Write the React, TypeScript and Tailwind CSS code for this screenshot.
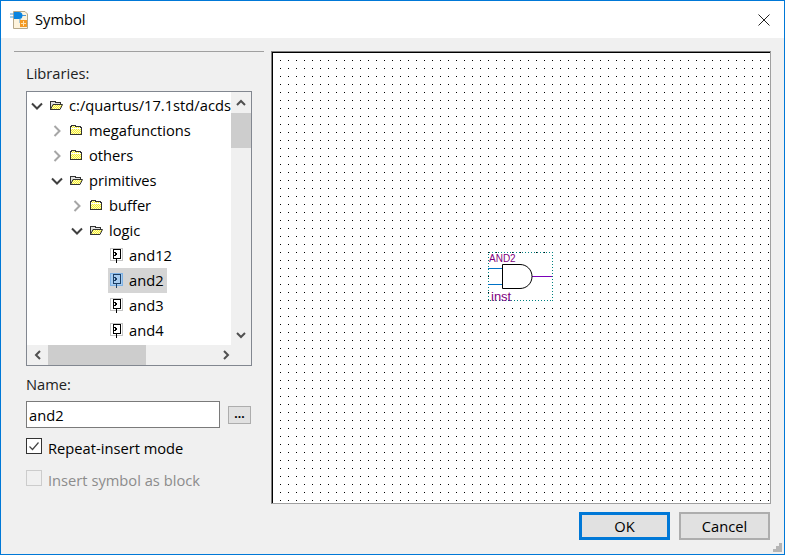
const uiFont = 'font-["Open_Sans","Noto_Sans",sans-serif]';

function Chevron({ open, dim }: { open?: boolean; dim?: boolean }) {
  return (
    <svg width="12" height="12" viewBox="0 0 12 12" fill="none" className="shrink-0">
      <polyline
        points={open ? '1,3.5 6,8.5 11,3.5' : '3.5,1 8.5,6 3.5,11'}
        stroke={dim ? '#a6a6a6' : '#404040'}
        strokeWidth="2"
      />
    </svg>
  );
}

function Folder({ open }: { open?: boolean }) {
  const id = open ? 'ditherOpen' : 'ditherClosed';
  return (
    <svg width="13" height="11" viewBox="0 0 13 11" className="shrink-0" shapeRendering="crispEdges">
      <defs>
        <pattern id={id} width="2" height="2" patternUnits="userSpaceOnUse">
          <rect width="2" height="2" fill="#ffffc0" />
          <rect width="1" height="1" fill="#f2ea30" />
          <rect x="1" y="1" width="1" height="1" fill="#f2ea30" />
        </pattern>
      </defs>
      {open ? (
        <>
          <path d="M0.5 9.5V1.5H5.5V2.5H10.5V4.5" fill="#e0e0e0" stroke="#333" />
          <path d="M0.5 9.5L3 4.5H12.5L10 9.5Z" fill={`url(#${id})`} stroke="#333" shapeRendering="auto" />
        </>
      ) : (
        <>
          <path d="M0.5 9.5V1.5H1.5V0.5H5.5V1.5H10.5V2.5H11.5V9.5Z" fill={`url(#${id})`} stroke="#333" />
          <path d="M1 3H11" stroke="#fff" />
        </>
      )}
    </svg>
  );
}

function SymbolIcon({ selected }: { selected?: boolean }) {
  const ink = selected ? '#1c3f66' : '#000';
  return (
    <svg width="13" height="15" viewBox="0 0 13 15" className="shrink-0" shapeRendering="crispEdges">
      <rect x="0.5" y="0.5" width="12" height="12" fill={selected ? '#a9cdf0' : '#fff'} stroke={selected ? '#7fb2e5' : '#c4c4c4'} />
      <path d="M3.5 1.5H10.5V10.5H3.5Z" fill={selected ? '#a9cdf0' : '#fff'} stroke={ink} />
      <path d="M6.5 10.5V14.5M4 4.5H5V5.5H6V6.5H5V7.5H4" fill="none" stroke={ink} />
    </svg>
  );
}

const treeRows = [
  { label: 'c:/quartus/17.1std/acds', indent: 'pl-0', type: 'open' },
  { label: 'megafunctions', indent: 'pl-[20px]', type: 'closed' },
  { label: 'others', indent: 'pl-[20px]', type: 'closed' },
  { label: 'primitives', indent: 'pl-[20px]', type: 'open' },
  { label: 'buffer', indent: 'pl-[40px]', type: 'closed' },
  { label: 'logic', indent: 'pl-[40px]', type: 'open' },
  { label: 'and12', indent: 'pl-[77px]', type: 'symbol' },
  { label: 'and2', indent: 'pl-[77px]', type: 'selected' },
  { label: 'and3', indent: 'pl-[77px]', type: 'symbol' },
  { label: 'and4', indent: 'pl-[77px]', type: 'symbol' },
];

function TreeRow({ label, indent, type }: { label: string; indent: string; type: string }) {
  const isSymbol = type === 'symbol' || type === 'selected';
  return (
    <div className={`flex h-[25px] items-center whitespace-nowrap ${indent}`}>
      {isSymbol ? (
        <div className={`flex h-[25px] items-center gap-[6px] pl-[2px] pr-[3px] ${type === 'selected' ? 'bg-[#d5d5d5]' : ''}`}>
          <SymbolIcon selected={type === 'selected'} />
          <span>{label}</span>
        </div>
      ) : (
        <>
          <Chevron open={type === 'open'} dim={type === 'closed'} />
          <div className="ml-[7px] mr-[6px]">
            <Folder open={type === 'open'} />
          </div>
          <span>{label}</span>
        </>
      )}
    </div>
  );
}

function ScrollArrow({ dir }: { dir: 'up' | 'down' | 'left' | 'right' }) {
  const points = {
    up: '1,7 5,3 9,7',
    down: '1,3 5,7 9,3',
    left: '7,1 3,5 7,9',
    right: '3,1 7,5 3,9',
  }[dir];
  return (
    <svg width="10" height="10" viewBox="0 0 10 10" fill="none" className="shrink-0">
      <polyline points={points} stroke="#505050" strokeWidth="2" />
    </svg>
  );
}

function TitleIcon() {
  return (
    <svg width="20" height="20" viewBox="0 0 20 20">
      <path d="M3.5 1.5H15L17.5 4V18.5H3.5Z" fill="#fdf3dc" stroke="#b5a88a" />
      <path d="M0 4H5M0 7H5M12 5.5H16M10 9V13H13" fill="none" stroke="#4a9ad8" />
      <path d="M4 2H9A3.5 3.5 0 0 1 9 9H4Z" fill="#0a84e0" />
      <rect x="10" y="10" width="7" height="7" fill="#f59a23" />
      <path d="M13.5 11V16M11 13.5H16" stroke="#ffe3b0" />
    </svg>
  );
}

function SchematicCanvas() {
  return (
    <svg width="497" height="450" viewBox="0 0 497 450" className="block">
      <defs>
        <pattern id="dots" x="7" y="7" width="8" height="8" patternUnits="userSpaceOnUse">
          <rect x="0" y="0" width="1" height="1" fill="#000" />
        </pattern>
      </defs>
      <rect width="497" height="450" fill="#fff" />
      <rect width="497" height="450" fill="url(#dots)" />
      <g transform="translate(-273 -53)" shapeRendering="crispEdges">
        <rect x="488.5" y="252.5" width="64" height="48" fill="#fff" stroke="#008080" strokeDasharray="1 2" />
        <path d="M488 268.5H502M488 284.5H502" stroke="#0072c6" />
        <path d="M532 276.5H552" stroke="#7a00b8" />
      </g>
      <g transform="translate(-273 -53)">
        <path d="M502.5 264.5H520C527 264.5 532 270 532 276.5C532 283 527 288.5 520 288.5H502.5Z" fill="#fff" stroke="#000" />
        <text x="489" y="262" fontSize="10" fill="#800080" fontFamily="Liberation Sans, sans-serif">AND2</text>
        <text x="491" y="301" fontSize="13" fill="#800080" fontFamily="Liberation Sans, sans-serif">inst</text>
      </g>
    </svg>
  );
}

export default function App() {
  return (
    <div className={`flex h-[555px] w-[785px] flex-col border border-[#0078d7] bg-[#f0f0f0] text-[14.7px] text-black ${uiFont}`}>
      {/* Title bar */}
      <div className="flex h-[37px] shrink-0 items-center bg-white pl-[9px] pr-[14px]">
        <TitleIcon />
        <span className="ml-[5px]">Symbol</span>
        <svg width="12" height="12" viewBox="0 0 12 12" className="ml-auto">
          <path d="M0.5 0.5L11.5 11.5M11.5 0.5L0.5 11.5" stroke="#222" />
        </svg>
      </div>

      <div className="flex min-h-0 flex-1">
        {/* Left column */}
        <div className="w-[270px] shrink-0 pl-[13px] pt-[13px]">
          <div className="h-px w-[250px] bg-[#a0a0a0]" />
          <div className="ml-[12px] mt-[11px] w-[226px]">
            <div className="h-[20px] leading-[20px] text-[#222]">Libraries:</div>
            <div className="mt-[8px] flex h-[275px] flex-col border border-[#828790] bg-white">
              <div className="flex h-[253px]">
                <div className="h-full w-[204px] overflow-hidden bg-white pl-[4px] pt-[1px]">
                  {treeRows.map((row) => (
                    <TreeRow key={row.label} {...row} />
                  ))}
                </div>
                <div className="flex w-[20px] flex-col items-center bg-[#f0f0f0]">
                  <div className="flex h-[21px] items-center">
                    <ScrollArrow dir="up" />
                  </div>
                  <div className="h-[35px] w-full bg-[#cdcdcd]" />
                  <div className="mt-auto flex h-[21px] items-center">
                    <ScrollArrow dir="down" />
                  </div>
                </div>
              </div>
              <div className="flex h-[20px] items-center bg-[#f0f0f0]">
                <div className="flex w-[21px] justify-center">
                  <ScrollArrow dir="left" />
                </div>
                <div className="h-full w-[98px] bg-[#cdcdcd]" />
                <div className="ml-auto flex w-[50px] justify-center">
                  <ScrollArrow dir="right" />
                </div>
              </div>
            </div>

            <div className="mt-[8px] h-[20px] leading-[20px] text-[#222]">Name:</div>
            <div className="mt-[7px] flex items-center">
              <div className="flex h-[27px] w-[194px] items-center border border-[#7a7a7a] bg-white pl-[2px] pt-[2px]">and2</div>
              <div className="ml-[8px] flex h-[18px] w-[23px] items-start justify-center border border-[#adadad] bg-[#e1e1e1] text-[12px] font-bold leading-[14px]">
                ...
              </div>
            </div>
            <div className="mt-[10px] flex h-[16px] items-center">
              <div className="flex h-[16px] w-[16px] items-center justify-center border border-[#333] bg-white">
                <svg width="12" height="12" viewBox="0 0 12 12" fill="none">
                  <path d="M1.5 6.5L4.5 9.5L10.5 2.5" stroke="#444" strokeWidth="1.2" />
                </svg>
              </div>
              <span className="ml-[6px] pt-[4px]">Repeat-insert mode</span>
            </div>
            <div className="mt-[16px] flex h-[16px] items-center text-[#8c8c8c]">
              <div className="h-[16px] w-[16px] border border-[#cccccc]" />
              <span className="ml-[6px] pt-[5px]">Insert symbol as block</span>
            </div>
          </div>
        </div>

        {/* Right column */}
        <div className="flex flex-1 flex-col items-start">
          <div className="mt-[13px] border-b border-l border-r border-t border-b-[#a0a0a0] border-l-[#808080] border-r-[#a0a0a0] border-t-[#808080]">
            <div className="border-l border-t border-l-black border-t-black">
              <SchematicCanvas />
            </div>
          </div>
          <div className="relative mt-[8px] flex w-full">
            <button className="ml-[308px] h-[28px] w-[91px] border-[3px] border-[#0078d7] bg-[#e1e1e1]">OK</button>
            <button className="ml-[9px] h-[28px] w-[91px] border-2 border-[#adadad] bg-[#e1e1e1]">Cancel</button>
            <svg width="10" height="10" viewBox="0 0 10 10" className="absolute bottom-[-13px] right-[1px]" fill="#b4b4b4">
              <rect x="6" y="0" width="3" height="3" />
              <rect x="3" y="3" width="3" height="3" />
              <rect x="6" y="3" width="3" height="3" />
              <rect x="0" y="6" width="3" height="3" />
              <rect x="3" y="6" width="3" height="3" />
              <rect x="6" y="6" width="3" height="3" />
            </svg>
          </div>
        </div>
      </div>
    </div>
  );
}
